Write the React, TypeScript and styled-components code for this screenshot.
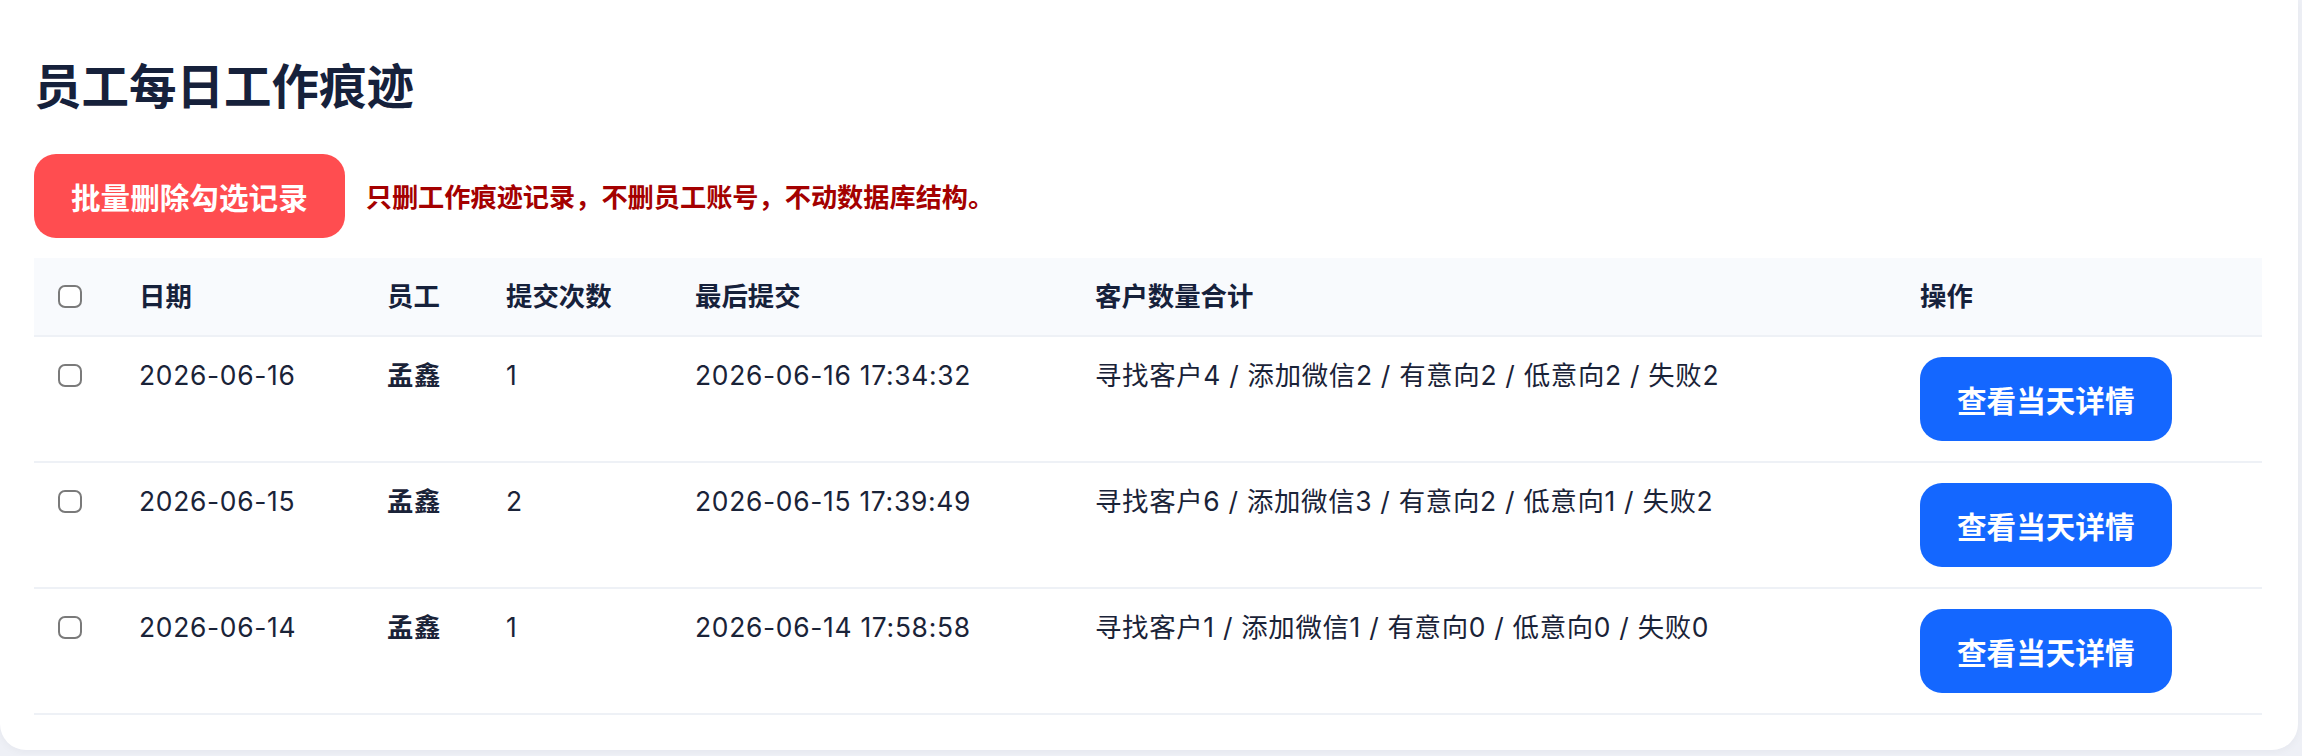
import React from 'react';
import styled, { createGlobalStyle } from 'styled-components';

const GlobalStyle = createGlobalStyle`
  html, body {
    margin: 0;
    padding: 0;
    background: #eef0f6;
  }
  body {
    font-family: Inter, "Noto Sans CJK SC", sans-serif;
    color: #17213a;
  }
`;

const Page = styled.div`
  padding: 0 4px 5px 0;
`;

const Card = styled.div`
  background: #fff;
  border-radius: 0 0 26px 26px;
  padding: 56px 36px 35px 34px;
  box-shadow: 0 2px 8px rgba(20, 30, 60, 0.04);
`;

const Title = styled.h1`
  margin: 0 0 37px;
  font-size: 47.5px;
  line-height: 61px;
  font-weight: 700;
  color: #16213b;
`;

const Toolbar = styled.div`
  display: flex;
  align-items: center;
  gap: 21px;
  margin-bottom: 20px;
`;

const Button = styled.button<{ $tone: 'danger' | 'primary' }>`
  height: 84px;
  padding: 0 37px;
  border: none;
  border-radius: 22px;
  font-family: inherit;
  font-size: 29.6px;
  font-weight: 700;
  color: #fff;
  cursor: pointer;
  white-space: nowrap;
  background: ${(p) => (p.$tone === 'danger' ? '#ff4d50' : '#1467ff')};
`;

const Note = styled.span`
  font-size: 26.2px;
  font-weight: 700;
  color: #a40000;
`;

const Table = styled.table`
  width: 100%;
  border-collapse: collapse;
  table-layout: fixed;
`;

const Th = styled.th`
  background: #f8fafd;
  padding: 20px 24px;
  text-align: left;
  font-size: 26.4px;
  line-height: 37px;
  font-weight: 700;
  color: #16213b;
  border-bottom: 2px solid #eef1f6;
`;

const Td = styled.td<{ $bold?: boolean }>`
  padding: 20px 24px;
  vertical-align: top;
  font-size: 26.4px;
  line-height: 37px;
  letter-spacing: 0.7px;
  font-weight: ${(p) => (p.$bold ? 700 : 400)};
  color: #1a2338;
  border-bottom: 2px solid #eef1f6;
  white-space: nowrap;
`;

const CheckCell = styled.div`
  display: flex;
  align-items: center;
  height: 37px;
`;

const Check = styled.input`
  appearance: none;
  width: 24px;
  height: 23px;
  margin: 0;
  border: 2.5px solid #7a7a7a;
  border-radius: 7px;
  background: #fff;
  box-sizing: border-box;
`;

const columns = [81, 248, 119, 189, 400, 825, 366];

const rows = [
  {
    date: '2026-06-16',
    name: '孟鑫',
    count: 1,
    last: '2026-06-16 17:34:32',
    summary: '寻找客户4 / 添加微信2 / 有意向2 / 低意向2 / 失败2',
  },
  {
    date: '2026-06-15',
    name: '孟鑫',
    count: 2,
    last: '2026-06-15 17:39:49',
    summary: '寻找客户6 / 添加微信3 / 有意向2 / 低意向1 / 失败2',
  },
  {
    date: '2026-06-14',
    name: '孟鑫',
    count: 1,
    last: '2026-06-14 17:58:58',
    summary: '寻找客户1 / 添加微信1 / 有意向0 / 低意向0 / 失败0',
  },
];

const App: React.FC = () => {
  return (
    <>
      <GlobalStyle />
      <Page>
        <Card>
          <Title>员工每日工作痕迹</Title>
          <Toolbar>
            <Button $tone="danger">批量删除勾选记录</Button>
            <Note>只删工作痕迹记录，不删员工账号，不动数据库结构。</Note>
          </Toolbar>
          <Table>
            <colgroup>
              {columns.map((w, i) => (
                <col key={i} style={{ width: w }} />
              ))}
            </colgroup>
            <thead>
              <tr>
                <Th>
                  <CheckCell>
                    <Check type="checkbox" />
                  </CheckCell>
                </Th>
                <Th>日期</Th>
                <Th>员工</Th>
                <Th>提交次数</Th>
                <Th>最后提交</Th>
                <Th>客户数量合计</Th>
                <Th>操作</Th>
              </tr>
            </thead>
            <tbody>
              {rows.map((r) => (
                <tr key={r.date}>
                  <Td>
                    <CheckCell>
                      <Check type="checkbox" />
                    </CheckCell>
                  </Td>
                  <Td>{r.date}</Td>
                  <Td $bold>{r.name}</Td>
                  <Td>{r.count}</Td>
                  <Td>{r.last}</Td>
                  <Td>{r.summary}</Td>
                  <Td>
                    <Button $tone="primary">查看当天详情</Button>
                  </Td>
                </tr>
              ))}
            </tbody>
          </Table>
        </Card>
      </Page>
    </>
  );
};

export default App;
